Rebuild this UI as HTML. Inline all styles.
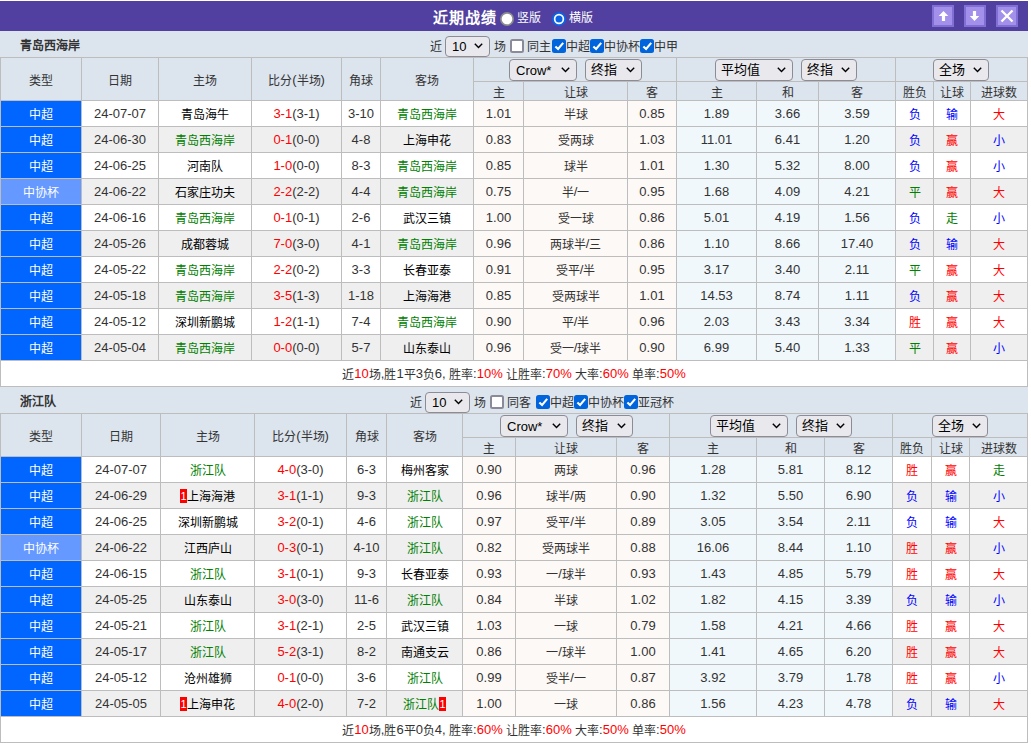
<!DOCTYPE html>
<html lang="zh-CN"><head><meta charset="utf-8"><title>近期战绩</title>
<style>
html,body{margin:0;padding:0;background:#fff;}
body{width:1031px;height:743px;overflow:hidden;position:relative;font-family:"Liberation Sans",sans-serif;font-size:12px;color:#333;}
.bar{position:absolute;left:0;top:1px;width:1028px;height:30px;background:#5140a0;}
.sec{position:absolute;left:0;width:1028px;height:26px;background:#dce4ee;}
.stitle{position:absolute;left:20px;top:0;line-height:30px;font-weight:bold;font-size:12px;color:#333;}
.grid{position:absolute;left:0;width:1028px;background:#bdbdbd;}
.c{position:absolute;text-align:center;white-space:nowrap;overflow:hidden;}
.h{color:#333;}
.h2{}
.tw{color:#fff;}
.g{color:#008000;}
.k{color:#000;}
.r{color:#ff0000;}
.rc{display:inline-block;position:relative;background:#f00;color:#fff;font-weight:normal;font-size:11px;width:7px;height:14px;vertical-align:-2px;overflow:hidden;}
.rc::after{content:'1';position:absolute;left:0;top:0;width:7px;text-align:center;line-height:15px;}
.sel{position:absolute;height:20px;border:1px solid #8c8c96;border-radius:4px;background:#e9e9ed;box-sizing:border-box;height:22px;color:#000;font-size:13px;}
.sel .st{position:absolute;left:6px;top:0;}
.sel .sl{font-size:13px;}
.sel .st{font-size:13px;}
.sel .sc{left:5px;}
.chev{position:absolute;right:6px;width:9px;height:6px;}
.chev svg{position:absolute;left:0;top:0;}
.sum{}
.t{position:absolute;line-height:32px;font-size:12px;color:#333;white-space:nowrap;}
.cb{position:absolute;width:14px;height:14px;box-sizing:border-box;border:2px solid #8a8a98;border-radius:2.5px;background:#fff;}
.cb.on{border:none;background:#0064dc;}
.cb svg{position:absolute;left:0;top:0;}
.btitle{position:absolute;left:433px;top:0;line-height:33px;font-size:15px;letter-spacing:1px;font-weight:bold;color:#fff;}
.bt{position:absolute;top:0;line-height:34px;font-size:12px;color:#fff;}
.rad{position:absolute;width:14px;height:14px;box-sizing:border-box;border-radius:50%;border:2px solid #8c8c8c;background:#fff;}
.rad.on{border:2px solid #0b64e4;}
.rad.on i{position:absolute;left:1.5px;top:1.5px;width:7px;height:7px;border-radius:50%;background:#0b64e4;}
.rsv{position:absolute;}
.btn{position:absolute;top:4px;width:22px;height:22px;box-sizing:border-box;border:2px solid #8070d3;background:#a290ea;}
.btn svg{position:absolute;left:2px;top:2px;}

.n{font-size:13px;position:relative;top:-1px;line-height:1px;}
</style></head>
<body>
<div class="bar"><span class="btitle">近期战绩</span><svg class="rsv" style="left:500px;top:11px;" width="14" height="14" viewBox="0 0 14 14"><circle cx="7" cy="7" r="7" fill="#8c8c8c"/><circle cx="7" cy="7" r="5.3" fill="#fff"/></svg><span class="bt" style="left:517px">竖版</span><svg class="rsv" style="left:552px;top:11px;" width="14" height="14" viewBox="0 0 14 14"><circle cx="7" cy="7" r="7" fill="#0b64e4"/><circle cx="7" cy="7" r="5.2" fill="#fff"/><circle cx="7" cy="7" r="3.5" fill="#0b64e4"/></svg><span class="bt" style="left:569px">横版</span><span class="btn" style="left:932px"><svg width="14" height="14" viewBox="0 0 14 14"><path d="M7.5 1.9 L12.3 6.9 L9.1 6.9 L9.1 12.1 L5.9 12.1 L5.9 6.9 L2.7 6.9 Z" fill="#fff"/></svg></span><span class="btn" style="left:964px"><svg width="14" height="14" viewBox="0 0 14 14"><path d="M4.9 1.9 L8.1 1.9 L8.1 7.1 L11.3 7.1 L6.5 12.1 L1.8 7.1 L4.9 7.1 Z" fill="#fff"/></svg></span><span class="btn" style="left:996px"><svg width="14" height="14" viewBox="0 0 14 14"><path d="M1.5 1.5 L12.5 12.5 M12.5 1.5 L1.5 12.5" stroke="#fff" stroke-width="2.3"/></svg></span></div>
<div class="sec" style="top:31px;"><span class="stitle">青岛西海岸</span>
<span class="t " style="left:430px;top:0px;">近</span>
<div class="sel small" style="left:445px;top:5px;width:45px;height:21px;"><span class="st sl" style="line-height:19px">10</span><span class="chev" style="top:6px"><svg width="9" height="6" viewBox="0 0 9 6"><path d="M0.8 0.8 L4.5 4.6 L8.2 0.8" fill="none" stroke="#000" stroke-width="1.4"/></svg></span></div>
<span class="t " style="left:494px;top:0px;">场</span>
<span class="cb" style="left:510px;top:8px;"></span>
<span class="t " style="left:527px;top:0px;">同主</span>
<span class="cb on" style="left:552px;top:8px;"><svg width="14" height="14" viewBox="0 0 14 14"><path d="M3.4 7.4 L6.1 10 L11.2 3.9" fill="none" stroke="#fff" stroke-width="2.1"/></svg></span>
<span class="t " style="left:566px;top:0px;">中超</span>
<span class="cb on" style="left:590px;top:8px;"><svg width="14" height="14" viewBox="0 0 14 14"><path d="M3.4 7.4 L6.1 10 L11.2 3.9" fill="none" stroke="#fff" stroke-width="2.1"/></svg></span>
<span class="t " style="left:604px;top:0px;">中协杯</span>
<span class="cb on" style="left:640px;top:8px;"><svg width="14" height="14" viewBox="0 0 14 14"><path d="M3.4 7.4 L6.1 10 L11.2 3.9" fill="none" stroke="#fff" stroke-width="2.1"/></svg></span>
<span class="t " style="left:654px;top:0px;">中甲</span>
</div>
<div class="grid" style="top:57px;height:330px;"></div>
<div class="c h" style="left:1px;top:58px;width:80px;height:42px;line-height:46px;background:#dce4ee;">类型</div>
<div class="c h" style="left:82px;top:58px;width:76px;height:42px;line-height:46px;background:#dce4ee;">日期</div>
<div class="c h" style="left:159px;top:58px;width:92px;height:42px;line-height:46px;background:#dce4ee;">主场</div>
<div class="c h" style="left:252px;top:58px;width:89px;height:42px;line-height:46px;background:#dce4ee;">比分<span class="n">(</span>半场<span class="n">)</span></div>
<div class="c h" style="left:342px;top:58px;width:38px;height:42px;line-height:46px;background:#dce4ee;">角球</div>
<div class="c h" style="left:381px;top:58px;width:92px;height:42px;line-height:46px;background:#dce4ee;">客场</div>
<div class="c h" style="left:474px;top:58px;width:202px;height:23px;line-height:27px;background:#dce4ee;"></div>
<div class="c h" style="left:677px;top:58px;width:218px;height:23px;line-height:27px;background:#dce4ee;"></div>
<div class="c h" style="left:896px;top:58px;width:131px;height:23px;line-height:27px;background:#dce4ee;"></div>
<div class="c h h2" style="left:474px;top:82px;width:49px;height:18px;line-height:22px;background:#dce4ee;">主</div>
<div class="c h h2" style="left:524px;top:82px;width:103px;height:18px;line-height:22px;background:#dce4ee;">让球</div>
<div class="c h h2" style="left:628px;top:82px;width:48px;height:18px;line-height:22px;background:#dce4ee;">客</div>
<div class="c h h2" style="left:677px;top:82px;width:79px;height:18px;line-height:22px;background:#dce4ee;">主</div>
<div class="c h h2" style="left:757px;top:82px;width:61px;height:18px;line-height:22px;background:#dce4ee;">和</div>
<div class="c h h2" style="left:819px;top:82px;width:76px;height:18px;line-height:22px;background:#dce4ee;">客</div>
<div class="c h h2" style="left:896px;top:82px;width:37px;height:18px;line-height:22px;background:#dce4ee;">胜负</div>
<div class="c h h2" style="left:934px;top:82px;width:36px;height:18px;line-height:22px;background:#dce4ee;">让球</div>
<div class="c h h2" style="left:971px;top:82px;width:56px;height:18px;line-height:22px;background:#dce4ee;">进球数</div>
<div class="sel " style="left:509px;top:59px;width:68px;height:22px;"><span class="st sl" style="line-height:22px">Crow*</span><span class="chev" style="top:7px"><svg width="9" height="6" viewBox="0 0 9 6"><path d="M0.8 0.8 L4.5 4.6 L8.2 0.8" fill="none" stroke="#000" stroke-width="1.4"/></svg></span></div>
<div class="sel " style="left:585px;top:59px;width:57px;height:22px;"><span class="st sc" style="line-height:20px">终指</span><span class="chev" style="top:7px"><svg width="9" height="6" viewBox="0 0 9 6"><path d="M0.8 0.8 L4.5 4.6 L8.2 0.8" fill="none" stroke="#000" stroke-width="1.4"/></svg></span></div>
<div class="sel " style="left:715px;top:59px;width:78px;height:22px;"><span class="st sc" style="line-height:20px">平均值</span><span class="chev" style="top:7px"><svg width="9" height="6" viewBox="0 0 9 6"><path d="M0.8 0.8 L4.5 4.6 L8.2 0.8" fill="none" stroke="#000" stroke-width="1.4"/></svg></span></div>
<div class="sel " style="left:801px;top:59px;width:56px;height:22px;"><span class="st sc" style="line-height:20px">终指</span><span class="chev" style="top:7px"><svg width="9" height="6" viewBox="0 0 9 6"><path d="M0.8 0.8 L4.5 4.6 L8.2 0.8" fill="none" stroke="#000" stroke-width="1.4"/></svg></span></div>
<div class="sel " style="left:933px;top:59px;width:56px;height:22px;"><span class="st sc" style="line-height:20px">全场</span><span class="chev" style="top:7px"><svg width="9" height="6" viewBox="0 0 9 6"><path d="M0.8 0.8 L4.5 4.6 L8.2 0.8" fill="none" stroke="#000" stroke-width="1.4"/></svg></span></div>
<div class="c tw" style="left:1px;top:101px;width:80px;height:25px;line-height:29px;background:#0066ff;">中超</div>
<div class="c " style="left:82px;top:101px;width:76px;height:25px;line-height:29px;background:#fff;"><span class="n">24-07-07</span></div>
<div class="c k" style="left:159px;top:101px;width:92px;height:25px;line-height:29px;background:#fff;">青岛海牛</div>
<div class="c " style="left:252px;top:101px;width:89px;height:25px;line-height:29px;background:#fff;"><span class="r"><span class="n">3-1</span></span><span class="n">(3-1)</span></div>
<div class="c " style="left:342px;top:101px;width:38px;height:25px;line-height:29px;background:#fff;"><span class="n">3-10</span></div>
<div class="c g" style="left:381px;top:101px;width:92px;height:25px;line-height:29px;background:#fff;">青岛西海岸</div>
<div class="c " style="left:474px;top:101px;width:49px;height:25px;line-height:29px;background:#fdf9f6;"><span class="n">1.01</span></div>
<div class="c " style="left:524px;top:101px;width:103px;height:25px;line-height:29px;background:#fdf9f6;">半球</div>
<div class="c " style="left:628px;top:101px;width:48px;height:25px;line-height:29px;background:#fdf9f6;"><span class="n">0.85</span></div>
<div class="c " style="left:677px;top:101px;width:79px;height:25px;line-height:29px;background:#f0f8fc;"><span class="n">1.89</span></div>
<div class="c " style="left:757px;top:101px;width:61px;height:25px;line-height:29px;background:#f0f8fc;"><span class="n">3.66</span></div>
<div class="c " style="left:819px;top:101px;width:76px;height:25px;line-height:29px;background:#f0f8fc;"><span class="n">3.59</span></div>
<div class="c " style="left:896px;top:101px;width:37px;height:25px;line-height:29px;background:#fff;color:#0000ff;">负</div>
<div class="c " style="left:934px;top:101px;width:36px;height:25px;line-height:29px;background:#fff;color:#0000ff;">输</div>
<div class="c " style="left:971px;top:101px;width:56px;height:25px;line-height:29px;background:#fff;color:#ff0000;">大</div>
<div class="c tw" style="left:1px;top:127px;width:80px;height:25px;line-height:29px;background:#0066ff;">中超</div>
<div class="c " style="left:82px;top:127px;width:76px;height:25px;line-height:29px;background:#efefef;"><span class="n">24-06-30</span></div>
<div class="c g" style="left:159px;top:127px;width:92px;height:25px;line-height:29px;background:#efefef;">青岛西海岸</div>
<div class="c " style="left:252px;top:127px;width:89px;height:25px;line-height:29px;background:#efefef;"><span class="r"><span class="n">0-1</span></span><span class="n">(0-0)</span></div>
<div class="c " style="left:342px;top:127px;width:38px;height:25px;line-height:29px;background:#efefef;"><span class="n">4-8</span></div>
<div class="c k" style="left:381px;top:127px;width:92px;height:25px;line-height:29px;background:#efefef;">上海申花</div>
<div class="c " style="left:474px;top:127px;width:49px;height:25px;line-height:29px;background:#fdf9f6;"><span class="n">0.83</span></div>
<div class="c " style="left:524px;top:127px;width:103px;height:25px;line-height:29px;background:#fdf9f6;">受两球</div>
<div class="c " style="left:628px;top:127px;width:48px;height:25px;line-height:29px;background:#fdf9f6;"><span class="n">1.03</span></div>
<div class="c " style="left:677px;top:127px;width:79px;height:25px;line-height:29px;background:#f0f8fc;"><span class="n">11.01</span></div>
<div class="c " style="left:757px;top:127px;width:61px;height:25px;line-height:29px;background:#f0f8fc;"><span class="n">6.41</span></div>
<div class="c " style="left:819px;top:127px;width:76px;height:25px;line-height:29px;background:#f0f8fc;"><span class="n">1.20</span></div>
<div class="c " style="left:896px;top:127px;width:37px;height:25px;line-height:29px;background:#efefef;color:#0000ff;">负</div>
<div class="c " style="left:934px;top:127px;width:36px;height:25px;line-height:29px;background:#efefef;color:#ff0000;">赢</div>
<div class="c " style="left:971px;top:127px;width:56px;height:25px;line-height:29px;background:#efefef;color:#0000ff;">小</div>
<div class="c tw" style="left:1px;top:153px;width:80px;height:25px;line-height:29px;background:#0066ff;">中超</div>
<div class="c " style="left:82px;top:153px;width:76px;height:25px;line-height:29px;background:#fff;"><span class="n">24-06-25</span></div>
<div class="c k" style="left:159px;top:153px;width:92px;height:25px;line-height:29px;background:#fff;">河南队</div>
<div class="c " style="left:252px;top:153px;width:89px;height:25px;line-height:29px;background:#fff;"><span class="r"><span class="n">1-0</span></span><span class="n">(0-0)</span></div>
<div class="c " style="left:342px;top:153px;width:38px;height:25px;line-height:29px;background:#fff;"><span class="n">8-3</span></div>
<div class="c g" style="left:381px;top:153px;width:92px;height:25px;line-height:29px;background:#fff;">青岛西海岸</div>
<div class="c " style="left:474px;top:153px;width:49px;height:25px;line-height:29px;background:#fdf9f6;"><span class="n">0.85</span></div>
<div class="c " style="left:524px;top:153px;width:103px;height:25px;line-height:29px;background:#fdf9f6;">球半</div>
<div class="c " style="left:628px;top:153px;width:48px;height:25px;line-height:29px;background:#fdf9f6;"><span class="n">1.01</span></div>
<div class="c " style="left:677px;top:153px;width:79px;height:25px;line-height:29px;background:#f0f8fc;"><span class="n">1.30</span></div>
<div class="c " style="left:757px;top:153px;width:61px;height:25px;line-height:29px;background:#f0f8fc;"><span class="n">5.32</span></div>
<div class="c " style="left:819px;top:153px;width:76px;height:25px;line-height:29px;background:#f0f8fc;"><span class="n">8.00</span></div>
<div class="c " style="left:896px;top:153px;width:37px;height:25px;line-height:29px;background:#fff;color:#0000ff;">负</div>
<div class="c " style="left:934px;top:153px;width:36px;height:25px;line-height:29px;background:#fff;color:#ff0000;">赢</div>
<div class="c " style="left:971px;top:153px;width:56px;height:25px;line-height:29px;background:#fff;color:#0000ff;">小</div>
<div class="c tw" style="left:1px;top:179px;width:80px;height:25px;line-height:29px;background:#6699ff;">中协杯</div>
<div class="c " style="left:82px;top:179px;width:76px;height:25px;line-height:29px;background:#efefef;"><span class="n">24-06-22</span></div>
<div class="c k" style="left:159px;top:179px;width:92px;height:25px;line-height:29px;background:#efefef;">石家庄功夫</div>
<div class="c " style="left:252px;top:179px;width:89px;height:25px;line-height:29px;background:#efefef;"><span class="r"><span class="n">2-2</span></span><span class="n">(2-2)</span></div>
<div class="c " style="left:342px;top:179px;width:38px;height:25px;line-height:29px;background:#efefef;"><span class="n">4-4</span></div>
<div class="c g" style="left:381px;top:179px;width:92px;height:25px;line-height:29px;background:#efefef;">青岛西海岸</div>
<div class="c " style="left:474px;top:179px;width:49px;height:25px;line-height:29px;background:#fdf9f6;"><span class="n">0.75</span></div>
<div class="c " style="left:524px;top:179px;width:103px;height:25px;line-height:29px;background:#fdf9f6;">半<span class="n">/</span>一</div>
<div class="c " style="left:628px;top:179px;width:48px;height:25px;line-height:29px;background:#fdf9f6;"><span class="n">0.95</span></div>
<div class="c " style="left:677px;top:179px;width:79px;height:25px;line-height:29px;background:#f0f8fc;"><span class="n">1.68</span></div>
<div class="c " style="left:757px;top:179px;width:61px;height:25px;line-height:29px;background:#f0f8fc;"><span class="n">4.09</span></div>
<div class="c " style="left:819px;top:179px;width:76px;height:25px;line-height:29px;background:#f0f8fc;"><span class="n">4.21</span></div>
<div class="c " style="left:896px;top:179px;width:37px;height:25px;line-height:29px;background:#efefef;color:#008000;">平</div>
<div class="c " style="left:934px;top:179px;width:36px;height:25px;line-height:29px;background:#efefef;color:#ff0000;">赢</div>
<div class="c " style="left:971px;top:179px;width:56px;height:25px;line-height:29px;background:#efefef;color:#ff0000;">大</div>
<div class="c tw" style="left:1px;top:205px;width:80px;height:25px;line-height:29px;background:#0066ff;">中超</div>
<div class="c " style="left:82px;top:205px;width:76px;height:25px;line-height:29px;background:#fff;"><span class="n">24-06-16</span></div>
<div class="c g" style="left:159px;top:205px;width:92px;height:25px;line-height:29px;background:#fff;">青岛西海岸</div>
<div class="c " style="left:252px;top:205px;width:89px;height:25px;line-height:29px;background:#fff;"><span class="r"><span class="n">0-1</span></span><span class="n">(0-1)</span></div>
<div class="c " style="left:342px;top:205px;width:38px;height:25px;line-height:29px;background:#fff;"><span class="n">2-6</span></div>
<div class="c k" style="left:381px;top:205px;width:92px;height:25px;line-height:29px;background:#fff;">武汉三镇</div>
<div class="c " style="left:474px;top:205px;width:49px;height:25px;line-height:29px;background:#fdf9f6;"><span class="n">1.00</span></div>
<div class="c " style="left:524px;top:205px;width:103px;height:25px;line-height:29px;background:#fdf9f6;">受一球</div>
<div class="c " style="left:628px;top:205px;width:48px;height:25px;line-height:29px;background:#fdf9f6;"><span class="n">0.86</span></div>
<div class="c " style="left:677px;top:205px;width:79px;height:25px;line-height:29px;background:#f0f8fc;"><span class="n">5.01</span></div>
<div class="c " style="left:757px;top:205px;width:61px;height:25px;line-height:29px;background:#f0f8fc;"><span class="n">4.19</span></div>
<div class="c " style="left:819px;top:205px;width:76px;height:25px;line-height:29px;background:#f0f8fc;"><span class="n">1.56</span></div>
<div class="c " style="left:896px;top:205px;width:37px;height:25px;line-height:29px;background:#fff;color:#0000ff;">负</div>
<div class="c " style="left:934px;top:205px;width:36px;height:25px;line-height:29px;background:#fff;color:#008000;">走</div>
<div class="c " style="left:971px;top:205px;width:56px;height:25px;line-height:29px;background:#fff;color:#0000ff;">小</div>
<div class="c tw" style="left:1px;top:231px;width:80px;height:25px;line-height:29px;background:#0066ff;">中超</div>
<div class="c " style="left:82px;top:231px;width:76px;height:25px;line-height:29px;background:#efefef;"><span class="n">24-05-26</span></div>
<div class="c k" style="left:159px;top:231px;width:92px;height:25px;line-height:29px;background:#efefef;">成都蓉城</div>
<div class="c " style="left:252px;top:231px;width:89px;height:25px;line-height:29px;background:#efefef;"><span class="r"><span class="n">7-0</span></span><span class="n">(3-0)</span></div>
<div class="c " style="left:342px;top:231px;width:38px;height:25px;line-height:29px;background:#efefef;"><span class="n">4-1</span></div>
<div class="c g" style="left:381px;top:231px;width:92px;height:25px;line-height:29px;background:#efefef;">青岛西海岸</div>
<div class="c " style="left:474px;top:231px;width:49px;height:25px;line-height:29px;background:#fdf9f6;"><span class="n">0.96</span></div>
<div class="c " style="left:524px;top:231px;width:103px;height:25px;line-height:29px;background:#fdf9f6;">两球半<span class="n">/</span>三</div>
<div class="c " style="left:628px;top:231px;width:48px;height:25px;line-height:29px;background:#fdf9f6;"><span class="n">0.86</span></div>
<div class="c " style="left:677px;top:231px;width:79px;height:25px;line-height:29px;background:#f0f8fc;"><span class="n">1.10</span></div>
<div class="c " style="left:757px;top:231px;width:61px;height:25px;line-height:29px;background:#f0f8fc;"><span class="n">8.66</span></div>
<div class="c " style="left:819px;top:231px;width:76px;height:25px;line-height:29px;background:#f0f8fc;"><span class="n">17.40</span></div>
<div class="c " style="left:896px;top:231px;width:37px;height:25px;line-height:29px;background:#efefef;color:#0000ff;">负</div>
<div class="c " style="left:934px;top:231px;width:36px;height:25px;line-height:29px;background:#efefef;color:#0000ff;">输</div>
<div class="c " style="left:971px;top:231px;width:56px;height:25px;line-height:29px;background:#efefef;color:#ff0000;">大</div>
<div class="c tw" style="left:1px;top:257px;width:80px;height:25px;line-height:29px;background:#0066ff;">中超</div>
<div class="c " style="left:82px;top:257px;width:76px;height:25px;line-height:29px;background:#fff;"><span class="n">24-05-22</span></div>
<div class="c g" style="left:159px;top:257px;width:92px;height:25px;line-height:29px;background:#fff;">青岛西海岸</div>
<div class="c " style="left:252px;top:257px;width:89px;height:25px;line-height:29px;background:#fff;"><span class="r"><span class="n">2-2</span></span><span class="n">(0-2)</span></div>
<div class="c " style="left:342px;top:257px;width:38px;height:25px;line-height:29px;background:#fff;"><span class="n">3-3</span></div>
<div class="c k" style="left:381px;top:257px;width:92px;height:25px;line-height:29px;background:#fff;">长春亚泰</div>
<div class="c " style="left:474px;top:257px;width:49px;height:25px;line-height:29px;background:#fdf9f6;"><span class="n">0.91</span></div>
<div class="c " style="left:524px;top:257px;width:103px;height:25px;line-height:29px;background:#fdf9f6;">受平<span class="n">/</span>半</div>
<div class="c " style="left:628px;top:257px;width:48px;height:25px;line-height:29px;background:#fdf9f6;"><span class="n">0.95</span></div>
<div class="c " style="left:677px;top:257px;width:79px;height:25px;line-height:29px;background:#f0f8fc;"><span class="n">3.17</span></div>
<div class="c " style="left:757px;top:257px;width:61px;height:25px;line-height:29px;background:#f0f8fc;"><span class="n">3.40</span></div>
<div class="c " style="left:819px;top:257px;width:76px;height:25px;line-height:29px;background:#f0f8fc;"><span class="n">2.11</span></div>
<div class="c " style="left:896px;top:257px;width:37px;height:25px;line-height:29px;background:#fff;color:#008000;">平</div>
<div class="c " style="left:934px;top:257px;width:36px;height:25px;line-height:29px;background:#fff;color:#ff0000;">赢</div>
<div class="c " style="left:971px;top:257px;width:56px;height:25px;line-height:29px;background:#fff;color:#ff0000;">大</div>
<div class="c tw" style="left:1px;top:283px;width:80px;height:25px;line-height:29px;background:#0066ff;">中超</div>
<div class="c " style="left:82px;top:283px;width:76px;height:25px;line-height:29px;background:#efefef;"><span class="n">24-05-18</span></div>
<div class="c g" style="left:159px;top:283px;width:92px;height:25px;line-height:29px;background:#efefef;">青岛西海岸</div>
<div class="c " style="left:252px;top:283px;width:89px;height:25px;line-height:29px;background:#efefef;"><span class="r"><span class="n">3-5</span></span><span class="n">(1-3)</span></div>
<div class="c " style="left:342px;top:283px;width:38px;height:25px;line-height:29px;background:#efefef;"><span class="n">1-18</span></div>
<div class="c k" style="left:381px;top:283px;width:92px;height:25px;line-height:29px;background:#efefef;">上海海港</div>
<div class="c " style="left:474px;top:283px;width:49px;height:25px;line-height:29px;background:#fdf9f6;"><span class="n">0.85</span></div>
<div class="c " style="left:524px;top:283px;width:103px;height:25px;line-height:29px;background:#fdf9f6;">受两球半</div>
<div class="c " style="left:628px;top:283px;width:48px;height:25px;line-height:29px;background:#fdf9f6;"><span class="n">1.01</span></div>
<div class="c " style="left:677px;top:283px;width:79px;height:25px;line-height:29px;background:#f0f8fc;"><span class="n">14.53</span></div>
<div class="c " style="left:757px;top:283px;width:61px;height:25px;line-height:29px;background:#f0f8fc;"><span class="n">8.74</span></div>
<div class="c " style="left:819px;top:283px;width:76px;height:25px;line-height:29px;background:#f0f8fc;"><span class="n">1.11</span></div>
<div class="c " style="left:896px;top:283px;width:37px;height:25px;line-height:29px;background:#efefef;color:#0000ff;">负</div>
<div class="c " style="left:934px;top:283px;width:36px;height:25px;line-height:29px;background:#efefef;color:#ff0000;">赢</div>
<div class="c " style="left:971px;top:283px;width:56px;height:25px;line-height:29px;background:#efefef;color:#ff0000;">大</div>
<div class="c tw" style="left:1px;top:309px;width:80px;height:25px;line-height:29px;background:#0066ff;">中超</div>
<div class="c " style="left:82px;top:309px;width:76px;height:25px;line-height:29px;background:#fff;"><span class="n">24-05-12</span></div>
<div class="c k" style="left:159px;top:309px;width:92px;height:25px;line-height:29px;background:#fff;">深圳新鹏城</div>
<div class="c " style="left:252px;top:309px;width:89px;height:25px;line-height:29px;background:#fff;"><span class="r"><span class="n">1-2</span></span><span class="n">(1-1)</span></div>
<div class="c " style="left:342px;top:309px;width:38px;height:25px;line-height:29px;background:#fff;"><span class="n">7-4</span></div>
<div class="c g" style="left:381px;top:309px;width:92px;height:25px;line-height:29px;background:#fff;">青岛西海岸</div>
<div class="c " style="left:474px;top:309px;width:49px;height:25px;line-height:29px;background:#fdf9f6;"><span class="n">0.90</span></div>
<div class="c " style="left:524px;top:309px;width:103px;height:25px;line-height:29px;background:#fdf9f6;">平<span class="n">/</span>半</div>
<div class="c " style="left:628px;top:309px;width:48px;height:25px;line-height:29px;background:#fdf9f6;"><span class="n">0.96</span></div>
<div class="c " style="left:677px;top:309px;width:79px;height:25px;line-height:29px;background:#f0f8fc;"><span class="n">2.03</span></div>
<div class="c " style="left:757px;top:309px;width:61px;height:25px;line-height:29px;background:#f0f8fc;"><span class="n">3.43</span></div>
<div class="c " style="left:819px;top:309px;width:76px;height:25px;line-height:29px;background:#f0f8fc;"><span class="n">3.34</span></div>
<div class="c " style="left:896px;top:309px;width:37px;height:25px;line-height:29px;background:#fff;color:#ff0000;">胜</div>
<div class="c " style="left:934px;top:309px;width:36px;height:25px;line-height:29px;background:#fff;color:#ff0000;">赢</div>
<div class="c " style="left:971px;top:309px;width:56px;height:25px;line-height:29px;background:#fff;color:#ff0000;">大</div>
<div class="c tw" style="left:1px;top:335px;width:80px;height:25px;line-height:29px;background:#0066ff;">中超</div>
<div class="c " style="left:82px;top:335px;width:76px;height:25px;line-height:29px;background:#efefef;"><span class="n">24-05-04</span></div>
<div class="c g" style="left:159px;top:335px;width:92px;height:25px;line-height:29px;background:#efefef;">青岛西海岸</div>
<div class="c " style="left:252px;top:335px;width:89px;height:25px;line-height:29px;background:#efefef;"><span class="r"><span class="n">0-0</span></span><span class="n">(0-0)</span></div>
<div class="c " style="left:342px;top:335px;width:38px;height:25px;line-height:29px;background:#efefef;"><span class="n">5-7</span></div>
<div class="c k" style="left:381px;top:335px;width:92px;height:25px;line-height:29px;background:#efefef;">山东泰山</div>
<div class="c " style="left:474px;top:335px;width:49px;height:25px;line-height:29px;background:#fdf9f6;"><span class="n">0.96</span></div>
<div class="c " style="left:524px;top:335px;width:103px;height:25px;line-height:29px;background:#fdf9f6;">受一<span class="n">/</span>球半</div>
<div class="c " style="left:628px;top:335px;width:48px;height:25px;line-height:29px;background:#fdf9f6;"><span class="n">0.90</span></div>
<div class="c " style="left:677px;top:335px;width:79px;height:25px;line-height:29px;background:#f0f8fc;"><span class="n">6.99</span></div>
<div class="c " style="left:757px;top:335px;width:61px;height:25px;line-height:29px;background:#f0f8fc;"><span class="n">5.40</span></div>
<div class="c " style="left:819px;top:335px;width:76px;height:25px;line-height:29px;background:#f0f8fc;"><span class="n">1.33</span></div>
<div class="c " style="left:896px;top:335px;width:37px;height:25px;line-height:29px;background:#efefef;color:#008000;">平</div>
<div class="c " style="left:934px;top:335px;width:36px;height:25px;line-height:29px;background:#efefef;color:#ff0000;">赢</div>
<div class="c " style="left:971px;top:335px;width:56px;height:25px;line-height:29px;background:#efefef;color:#0000ff;">小</div>
<div class="c sum" style="left:1px;top:361px;width:1026px;height:25px;line-height:29px;background:#fff;">近<span class="r"><span class="n">10</span></span>场<span class="n">,</span>胜<span class="n">1</span>平<span class="n">3</span>负<span class="n">6,</span> 胜率<span class="n">:</span><span class="r"><span class="n">10%</span></span> 让胜率<span class="n">:</span><span class="r"><span class="n">70%</span></span> 大率<span class="n">:</span><span class="r"><span class="n">60%</span></span> 单率<span class="n">:</span><span class="r"><span class="n">50%</span></span></div>
<div class="sec" style="top:387px;"><span class="stitle">浙江队</span>
<span class="t " style="left:410px;top:0px;">近</span>
<div class="sel small" style="left:425px;top:5px;width:45px;height:21px;"><span class="st sl" style="line-height:19px">10</span><span class="chev" style="top:6px"><svg width="9" height="6" viewBox="0 0 9 6"><path d="M0.8 0.8 L4.5 4.6 L8.2 0.8" fill="none" stroke="#000" stroke-width="1.4"/></svg></span></div>
<span class="t " style="left:474px;top:0px;">场</span>
<span class="cb" style="left:490px;top:8px;"></span>
<span class="t " style="left:507px;top:0px;">同客</span>
<span class="cb on" style="left:536px;top:8px;"><svg width="14" height="14" viewBox="0 0 14 14"><path d="M3.4 7.4 L6.1 10 L11.2 3.9" fill="none" stroke="#fff" stroke-width="2.1"/></svg></span>
<span class="t " style="left:550px;top:0px;">中超</span>
<span class="cb on" style="left:574px;top:8px;"><svg width="14" height="14" viewBox="0 0 14 14"><path d="M3.4 7.4 L6.1 10 L11.2 3.9" fill="none" stroke="#fff" stroke-width="2.1"/></svg></span>
<span class="t " style="left:588px;top:0px;">中协杯</span>
<span class="cb on" style="left:624px;top:8px;"><svg width="14" height="14" viewBox="0 0 14 14"><path d="M3.4 7.4 L6.1 10 L11.2 3.9" fill="none" stroke="#fff" stroke-width="2.1"/></svg></span>
<span class="t " style="left:638px;top:0px;">亚冠杯</span>
</div>
<div class="grid" style="top:413px;height:330px;"></div>
<div class="c h" style="left:1px;top:414px;width:80px;height:42px;line-height:46px;background:#dce4ee;">类型</div>
<div class="c h" style="left:82px;top:414px;width:78px;height:42px;line-height:46px;background:#dce4ee;">日期</div>
<div class="c h" style="left:161px;top:414px;width:93px;height:42px;line-height:46px;background:#dce4ee;">主场</div>
<div class="c h" style="left:255px;top:414px;width:91px;height:42px;line-height:46px;background:#dce4ee;">比分<span class="n">(</span>半场<span class="n">)</span></div>
<div class="c h" style="left:347px;top:414px;width:39px;height:42px;line-height:46px;background:#dce4ee;">角球</div>
<div class="c h" style="left:387px;top:414px;width:75px;height:42px;line-height:46px;background:#dce4ee;">客场</div>
<div class="c h" style="left:463px;top:414px;width:206px;height:23px;line-height:27px;background:#dce4ee;"></div>
<div class="c h" style="left:670px;top:414px;width:222px;height:23px;line-height:27px;background:#dce4ee;"></div>
<div class="c h" style="left:893px;top:414px;width:134px;height:23px;line-height:27px;background:#dce4ee;"></div>
<div class="c h h2" style="left:463px;top:438px;width:52px;height:18px;line-height:22px;background:#dce4ee;">主</div>
<div class="c h h2" style="left:516px;top:438px;width:100px;height:18px;line-height:22px;background:#dce4ee;">让球</div>
<div class="c h h2" style="left:617px;top:438px;width:52px;height:18px;line-height:22px;background:#dce4ee;">客</div>
<div class="c h h2" style="left:670px;top:438px;width:86px;height:18px;line-height:22px;background:#dce4ee;">主</div>
<div class="c h h2" style="left:757px;top:438px;width:67px;height:18px;line-height:22px;background:#dce4ee;">和</div>
<div class="c h h2" style="left:825px;top:438px;width:67px;height:18px;line-height:22px;background:#dce4ee;">客</div>
<div class="c h h2" style="left:893px;top:438px;width:38px;height:18px;line-height:22px;background:#dce4ee;">胜负</div>
<div class="c h h2" style="left:932px;top:438px;width:37px;height:18px;line-height:22px;background:#dce4ee;">让球</div>
<div class="c h h2" style="left:970px;top:438px;width:57px;height:18px;line-height:22px;background:#dce4ee;">进球数</div>
<div class="sel " style="left:500px;top:415px;width:68px;height:22px;"><span class="st sl" style="line-height:22px">Crow*</span><span class="chev" style="top:7px"><svg width="9" height="6" viewBox="0 0 9 6"><path d="M0.8 0.8 L4.5 4.6 L8.2 0.8" fill="none" stroke="#000" stroke-width="1.4"/></svg></span></div>
<div class="sel " style="left:576px;top:415px;width:57px;height:22px;"><span class="st sc" style="line-height:20px">终指</span><span class="chev" style="top:7px"><svg width="9" height="6" viewBox="0 0 9 6"><path d="M0.8 0.8 L4.5 4.6 L8.2 0.8" fill="none" stroke="#000" stroke-width="1.4"/></svg></span></div>
<div class="sel " style="left:710px;top:415px;width:78px;height:22px;"><span class="st sc" style="line-height:20px">平均值</span><span class="chev" style="top:7px"><svg width="9" height="6" viewBox="0 0 9 6"><path d="M0.8 0.8 L4.5 4.6 L8.2 0.8" fill="none" stroke="#000" stroke-width="1.4"/></svg></span></div>
<div class="sel " style="left:796px;top:415px;width:56px;height:22px;"><span class="st sc" style="line-height:20px">终指</span><span class="chev" style="top:7px"><svg width="9" height="6" viewBox="0 0 9 6"><path d="M0.8 0.8 L4.5 4.6 L8.2 0.8" fill="none" stroke="#000" stroke-width="1.4"/></svg></span></div>
<div class="sel " style="left:932px;top:415px;width:56px;height:22px;"><span class="st sc" style="line-height:20px">全场</span><span class="chev" style="top:7px"><svg width="9" height="6" viewBox="0 0 9 6"><path d="M0.8 0.8 L4.5 4.6 L8.2 0.8" fill="none" stroke="#000" stroke-width="1.4"/></svg></span></div>
<div class="c tw" style="left:1px;top:457px;width:80px;height:25px;line-height:29px;background:#0066ff;">中超</div>
<div class="c " style="left:82px;top:457px;width:78px;height:25px;line-height:29px;background:#fff;"><span class="n">24-07-07</span></div>
<div class="c g" style="left:161px;top:457px;width:93px;height:25px;line-height:29px;background:#fff;">浙江队</div>
<div class="c " style="left:255px;top:457px;width:91px;height:25px;line-height:29px;background:#fff;"><span class="r"><span class="n">4-0</span></span><span class="n">(3-0)</span></div>
<div class="c " style="left:347px;top:457px;width:39px;height:25px;line-height:29px;background:#fff;"><span class="n">6-3</span></div>
<div class="c k" style="left:387px;top:457px;width:75px;height:25px;line-height:29px;background:#fff;">梅州客家</div>
<div class="c " style="left:463px;top:457px;width:52px;height:25px;line-height:29px;background:#fdf9f6;"><span class="n">0.90</span></div>
<div class="c " style="left:516px;top:457px;width:100px;height:25px;line-height:29px;background:#fdf9f6;">两球</div>
<div class="c " style="left:617px;top:457px;width:52px;height:25px;line-height:29px;background:#fdf9f6;"><span class="n">0.96</span></div>
<div class="c " style="left:670px;top:457px;width:86px;height:25px;line-height:29px;background:#f0f8fc;"><span class="n">1.28</span></div>
<div class="c " style="left:757px;top:457px;width:67px;height:25px;line-height:29px;background:#f0f8fc;"><span class="n">5.81</span></div>
<div class="c " style="left:825px;top:457px;width:67px;height:25px;line-height:29px;background:#f0f8fc;"><span class="n">8.12</span></div>
<div class="c " style="left:893px;top:457px;width:38px;height:25px;line-height:29px;background:#fff;color:#ff0000;">胜</div>
<div class="c " style="left:932px;top:457px;width:37px;height:25px;line-height:29px;background:#fff;color:#ff0000;">赢</div>
<div class="c " style="left:970px;top:457px;width:57px;height:25px;line-height:29px;background:#fff;color:#008000;">走</div>
<div class="c tw" style="left:1px;top:483px;width:80px;height:25px;line-height:29px;background:#0066ff;">中超</div>
<div class="c " style="left:82px;top:483px;width:78px;height:25px;line-height:29px;background:#efefef;"><span class="n">24-06-29</span></div>
<div class="c k" style="left:161px;top:483px;width:93px;height:25px;line-height:29px;background:#efefef;"><b class="rc"></b>上海海港</div>
<div class="c " style="left:255px;top:483px;width:91px;height:25px;line-height:29px;background:#efefef;"><span class="r"><span class="n">3-1</span></span><span class="n">(1-1)</span></div>
<div class="c " style="left:347px;top:483px;width:39px;height:25px;line-height:29px;background:#efefef;"><span class="n">9-3</span></div>
<div class="c g" style="left:387px;top:483px;width:75px;height:25px;line-height:29px;background:#efefef;">浙江队</div>
<div class="c " style="left:463px;top:483px;width:52px;height:25px;line-height:29px;background:#fdf9f6;"><span class="n">0.96</span></div>
<div class="c " style="left:516px;top:483px;width:100px;height:25px;line-height:29px;background:#fdf9f6;">球半<span class="n">/</span>两</div>
<div class="c " style="left:617px;top:483px;width:52px;height:25px;line-height:29px;background:#fdf9f6;"><span class="n">0.90</span></div>
<div class="c " style="left:670px;top:483px;width:86px;height:25px;line-height:29px;background:#f0f8fc;"><span class="n">1.32</span></div>
<div class="c " style="left:757px;top:483px;width:67px;height:25px;line-height:29px;background:#f0f8fc;"><span class="n">5.50</span></div>
<div class="c " style="left:825px;top:483px;width:67px;height:25px;line-height:29px;background:#f0f8fc;"><span class="n">6.90</span></div>
<div class="c " style="left:893px;top:483px;width:38px;height:25px;line-height:29px;background:#efefef;color:#0000ff;">负</div>
<div class="c " style="left:932px;top:483px;width:37px;height:25px;line-height:29px;background:#efefef;color:#0000ff;">输</div>
<div class="c " style="left:970px;top:483px;width:57px;height:25px;line-height:29px;background:#efefef;color:#0000ff;">小</div>
<div class="c tw" style="left:1px;top:509px;width:80px;height:25px;line-height:29px;background:#0066ff;">中超</div>
<div class="c " style="left:82px;top:509px;width:78px;height:25px;line-height:29px;background:#fff;"><span class="n">24-06-25</span></div>
<div class="c k" style="left:161px;top:509px;width:93px;height:25px;line-height:29px;background:#fff;">深圳新鹏城</div>
<div class="c " style="left:255px;top:509px;width:91px;height:25px;line-height:29px;background:#fff;"><span class="r"><span class="n">3-2</span></span><span class="n">(0-1)</span></div>
<div class="c " style="left:347px;top:509px;width:39px;height:25px;line-height:29px;background:#fff;"><span class="n">4-6</span></div>
<div class="c g" style="left:387px;top:509px;width:75px;height:25px;line-height:29px;background:#fff;">浙江队</div>
<div class="c " style="left:463px;top:509px;width:52px;height:25px;line-height:29px;background:#fdf9f6;"><span class="n">0.97</span></div>
<div class="c " style="left:516px;top:509px;width:100px;height:25px;line-height:29px;background:#fdf9f6;">受平<span class="n">/</span>半</div>
<div class="c " style="left:617px;top:509px;width:52px;height:25px;line-height:29px;background:#fdf9f6;"><span class="n">0.89</span></div>
<div class="c " style="left:670px;top:509px;width:86px;height:25px;line-height:29px;background:#f0f8fc;"><span class="n">3.05</span></div>
<div class="c " style="left:757px;top:509px;width:67px;height:25px;line-height:29px;background:#f0f8fc;"><span class="n">3.54</span></div>
<div class="c " style="left:825px;top:509px;width:67px;height:25px;line-height:29px;background:#f0f8fc;"><span class="n">2.11</span></div>
<div class="c " style="left:893px;top:509px;width:38px;height:25px;line-height:29px;background:#fff;color:#0000ff;">负</div>
<div class="c " style="left:932px;top:509px;width:37px;height:25px;line-height:29px;background:#fff;color:#0000ff;">输</div>
<div class="c " style="left:970px;top:509px;width:57px;height:25px;line-height:29px;background:#fff;color:#ff0000;">大</div>
<div class="c tw" style="left:1px;top:535px;width:80px;height:25px;line-height:29px;background:#6699ff;">中协杯</div>
<div class="c " style="left:82px;top:535px;width:78px;height:25px;line-height:29px;background:#efefef;"><span class="n">24-06-22</span></div>
<div class="c k" style="left:161px;top:535px;width:93px;height:25px;line-height:29px;background:#efefef;">江西庐山</div>
<div class="c " style="left:255px;top:535px;width:91px;height:25px;line-height:29px;background:#efefef;"><span class="r"><span class="n">0-3</span></span><span class="n">(0-1)</span></div>
<div class="c " style="left:347px;top:535px;width:39px;height:25px;line-height:29px;background:#efefef;"><span class="n">4-10</span></div>
<div class="c g" style="left:387px;top:535px;width:75px;height:25px;line-height:29px;background:#efefef;">浙江队</div>
<div class="c " style="left:463px;top:535px;width:52px;height:25px;line-height:29px;background:#fdf9f6;"><span class="n">0.82</span></div>
<div class="c " style="left:516px;top:535px;width:100px;height:25px;line-height:29px;background:#fdf9f6;">受两球半</div>
<div class="c " style="left:617px;top:535px;width:52px;height:25px;line-height:29px;background:#fdf9f6;"><span class="n">0.88</span></div>
<div class="c " style="left:670px;top:535px;width:86px;height:25px;line-height:29px;background:#f0f8fc;"><span class="n">16.06</span></div>
<div class="c " style="left:757px;top:535px;width:67px;height:25px;line-height:29px;background:#f0f8fc;"><span class="n">8.44</span></div>
<div class="c " style="left:825px;top:535px;width:67px;height:25px;line-height:29px;background:#f0f8fc;"><span class="n">1.10</span></div>
<div class="c " style="left:893px;top:535px;width:38px;height:25px;line-height:29px;background:#efefef;color:#ff0000;">胜</div>
<div class="c " style="left:932px;top:535px;width:37px;height:25px;line-height:29px;background:#efefef;color:#ff0000;">赢</div>
<div class="c " style="left:970px;top:535px;width:57px;height:25px;line-height:29px;background:#efefef;color:#0000ff;">小</div>
<div class="c tw" style="left:1px;top:561px;width:80px;height:25px;line-height:29px;background:#0066ff;">中超</div>
<div class="c " style="left:82px;top:561px;width:78px;height:25px;line-height:29px;background:#fff;"><span class="n">24-06-15</span></div>
<div class="c g" style="left:161px;top:561px;width:93px;height:25px;line-height:29px;background:#fff;">浙江队</div>
<div class="c " style="left:255px;top:561px;width:91px;height:25px;line-height:29px;background:#fff;"><span class="r"><span class="n">3-1</span></span><span class="n">(0-1)</span></div>
<div class="c " style="left:347px;top:561px;width:39px;height:25px;line-height:29px;background:#fff;"><span class="n">9-3</span></div>
<div class="c k" style="left:387px;top:561px;width:75px;height:25px;line-height:29px;background:#fff;">长春亚泰</div>
<div class="c " style="left:463px;top:561px;width:52px;height:25px;line-height:29px;background:#fdf9f6;"><span class="n">0.93</span></div>
<div class="c " style="left:516px;top:561px;width:100px;height:25px;line-height:29px;background:#fdf9f6;">一<span class="n">/</span>球半</div>
<div class="c " style="left:617px;top:561px;width:52px;height:25px;line-height:29px;background:#fdf9f6;"><span class="n">0.93</span></div>
<div class="c " style="left:670px;top:561px;width:86px;height:25px;line-height:29px;background:#f0f8fc;"><span class="n">1.43</span></div>
<div class="c " style="left:757px;top:561px;width:67px;height:25px;line-height:29px;background:#f0f8fc;"><span class="n">4.85</span></div>
<div class="c " style="left:825px;top:561px;width:67px;height:25px;line-height:29px;background:#f0f8fc;"><span class="n">5.79</span></div>
<div class="c " style="left:893px;top:561px;width:38px;height:25px;line-height:29px;background:#fff;color:#ff0000;">胜</div>
<div class="c " style="left:932px;top:561px;width:37px;height:25px;line-height:29px;background:#fff;color:#ff0000;">赢</div>
<div class="c " style="left:970px;top:561px;width:57px;height:25px;line-height:29px;background:#fff;color:#ff0000;">大</div>
<div class="c tw" style="left:1px;top:587px;width:80px;height:25px;line-height:29px;background:#0066ff;">中超</div>
<div class="c " style="left:82px;top:587px;width:78px;height:25px;line-height:29px;background:#efefef;"><span class="n">24-05-25</span></div>
<div class="c k" style="left:161px;top:587px;width:93px;height:25px;line-height:29px;background:#efefef;">山东泰山</div>
<div class="c " style="left:255px;top:587px;width:91px;height:25px;line-height:29px;background:#efefef;"><span class="r"><span class="n">3-0</span></span><span class="n">(3-0)</span></div>
<div class="c " style="left:347px;top:587px;width:39px;height:25px;line-height:29px;background:#efefef;"><span class="n">11-6</span></div>
<div class="c g" style="left:387px;top:587px;width:75px;height:25px;line-height:29px;background:#efefef;">浙江队</div>
<div class="c " style="left:463px;top:587px;width:52px;height:25px;line-height:29px;background:#fdf9f6;"><span class="n">0.84</span></div>
<div class="c " style="left:516px;top:587px;width:100px;height:25px;line-height:29px;background:#fdf9f6;">半球</div>
<div class="c " style="left:617px;top:587px;width:52px;height:25px;line-height:29px;background:#fdf9f6;"><span class="n">1.02</span></div>
<div class="c " style="left:670px;top:587px;width:86px;height:25px;line-height:29px;background:#f0f8fc;"><span class="n">1.82</span></div>
<div class="c " style="left:757px;top:587px;width:67px;height:25px;line-height:29px;background:#f0f8fc;"><span class="n">4.15</span></div>
<div class="c " style="left:825px;top:587px;width:67px;height:25px;line-height:29px;background:#f0f8fc;"><span class="n">3.39</span></div>
<div class="c " style="left:893px;top:587px;width:38px;height:25px;line-height:29px;background:#efefef;color:#0000ff;">负</div>
<div class="c " style="left:932px;top:587px;width:37px;height:25px;line-height:29px;background:#efefef;color:#0000ff;">输</div>
<div class="c " style="left:970px;top:587px;width:57px;height:25px;line-height:29px;background:#efefef;color:#0000ff;">小</div>
<div class="c tw" style="left:1px;top:613px;width:80px;height:25px;line-height:29px;background:#0066ff;">中超</div>
<div class="c " style="left:82px;top:613px;width:78px;height:25px;line-height:29px;background:#fff;"><span class="n">24-05-21</span></div>
<div class="c g" style="left:161px;top:613px;width:93px;height:25px;line-height:29px;background:#fff;">浙江队</div>
<div class="c " style="left:255px;top:613px;width:91px;height:25px;line-height:29px;background:#fff;"><span class="r"><span class="n">3-1</span></span><span class="n">(2-1)</span></div>
<div class="c " style="left:347px;top:613px;width:39px;height:25px;line-height:29px;background:#fff;"><span class="n">2-5</span></div>
<div class="c k" style="left:387px;top:613px;width:75px;height:25px;line-height:29px;background:#fff;">武汉三镇</div>
<div class="c " style="left:463px;top:613px;width:52px;height:25px;line-height:29px;background:#fdf9f6;"><span class="n">1.03</span></div>
<div class="c " style="left:516px;top:613px;width:100px;height:25px;line-height:29px;background:#fdf9f6;">一球</div>
<div class="c " style="left:617px;top:613px;width:52px;height:25px;line-height:29px;background:#fdf9f6;"><span class="n">0.79</span></div>
<div class="c " style="left:670px;top:613px;width:86px;height:25px;line-height:29px;background:#f0f8fc;"><span class="n">1.58</span></div>
<div class="c " style="left:757px;top:613px;width:67px;height:25px;line-height:29px;background:#f0f8fc;"><span class="n">4.21</span></div>
<div class="c " style="left:825px;top:613px;width:67px;height:25px;line-height:29px;background:#f0f8fc;"><span class="n">4.66</span></div>
<div class="c " style="left:893px;top:613px;width:38px;height:25px;line-height:29px;background:#fff;color:#ff0000;">胜</div>
<div class="c " style="left:932px;top:613px;width:37px;height:25px;line-height:29px;background:#fff;color:#ff0000;">赢</div>
<div class="c " style="left:970px;top:613px;width:57px;height:25px;line-height:29px;background:#fff;color:#ff0000;">大</div>
<div class="c tw" style="left:1px;top:639px;width:80px;height:25px;line-height:29px;background:#0066ff;">中超</div>
<div class="c " style="left:82px;top:639px;width:78px;height:25px;line-height:29px;background:#efefef;"><span class="n">24-05-17</span></div>
<div class="c g" style="left:161px;top:639px;width:93px;height:25px;line-height:29px;background:#efefef;">浙江队</div>
<div class="c " style="left:255px;top:639px;width:91px;height:25px;line-height:29px;background:#efefef;"><span class="r"><span class="n">5-2</span></span><span class="n">(3-1)</span></div>
<div class="c " style="left:347px;top:639px;width:39px;height:25px;line-height:29px;background:#efefef;"><span class="n">8-2</span></div>
<div class="c k" style="left:387px;top:639px;width:75px;height:25px;line-height:29px;background:#efefef;">南通支云</div>
<div class="c " style="left:463px;top:639px;width:52px;height:25px;line-height:29px;background:#fdf9f6;"><span class="n">0.86</span></div>
<div class="c " style="left:516px;top:639px;width:100px;height:25px;line-height:29px;background:#fdf9f6;">一<span class="n">/</span>球半</div>
<div class="c " style="left:617px;top:639px;width:52px;height:25px;line-height:29px;background:#fdf9f6;"><span class="n">1.00</span></div>
<div class="c " style="left:670px;top:639px;width:86px;height:25px;line-height:29px;background:#f0f8fc;"><span class="n">1.41</span></div>
<div class="c " style="left:757px;top:639px;width:67px;height:25px;line-height:29px;background:#f0f8fc;"><span class="n">4.65</span></div>
<div class="c " style="left:825px;top:639px;width:67px;height:25px;line-height:29px;background:#f0f8fc;"><span class="n">6.20</span></div>
<div class="c " style="left:893px;top:639px;width:38px;height:25px;line-height:29px;background:#efefef;color:#ff0000;">胜</div>
<div class="c " style="left:932px;top:639px;width:37px;height:25px;line-height:29px;background:#efefef;color:#ff0000;">赢</div>
<div class="c " style="left:970px;top:639px;width:57px;height:25px;line-height:29px;background:#efefef;color:#ff0000;">大</div>
<div class="c tw" style="left:1px;top:665px;width:80px;height:25px;line-height:29px;background:#0066ff;">中超</div>
<div class="c " style="left:82px;top:665px;width:78px;height:25px;line-height:29px;background:#fff;"><span class="n">24-05-12</span></div>
<div class="c k" style="left:161px;top:665px;width:93px;height:25px;line-height:29px;background:#fff;">沧州雄狮</div>
<div class="c " style="left:255px;top:665px;width:91px;height:25px;line-height:29px;background:#fff;"><span class="r"><span class="n">0-1</span></span><span class="n">(0-0)</span></div>
<div class="c " style="left:347px;top:665px;width:39px;height:25px;line-height:29px;background:#fff;"><span class="n">3-6</span></div>
<div class="c g" style="left:387px;top:665px;width:75px;height:25px;line-height:29px;background:#fff;">浙江队</div>
<div class="c " style="left:463px;top:665px;width:52px;height:25px;line-height:29px;background:#fdf9f6;"><span class="n">0.99</span></div>
<div class="c " style="left:516px;top:665px;width:100px;height:25px;line-height:29px;background:#fdf9f6;">受半<span class="n">/</span>一</div>
<div class="c " style="left:617px;top:665px;width:52px;height:25px;line-height:29px;background:#fdf9f6;"><span class="n">0.87</span></div>
<div class="c " style="left:670px;top:665px;width:86px;height:25px;line-height:29px;background:#f0f8fc;"><span class="n">3.92</span></div>
<div class="c " style="left:757px;top:665px;width:67px;height:25px;line-height:29px;background:#f0f8fc;"><span class="n">3.79</span></div>
<div class="c " style="left:825px;top:665px;width:67px;height:25px;line-height:29px;background:#f0f8fc;"><span class="n">1.78</span></div>
<div class="c " style="left:893px;top:665px;width:38px;height:25px;line-height:29px;background:#fff;color:#ff0000;">胜</div>
<div class="c " style="left:932px;top:665px;width:37px;height:25px;line-height:29px;background:#fff;color:#ff0000;">赢</div>
<div class="c " style="left:970px;top:665px;width:57px;height:25px;line-height:29px;background:#fff;color:#0000ff;">小</div>
<div class="c tw" style="left:1px;top:691px;width:80px;height:25px;line-height:29px;background:#0066ff;">中超</div>
<div class="c " style="left:82px;top:691px;width:78px;height:25px;line-height:29px;background:#efefef;"><span class="n">24-05-05</span></div>
<div class="c k" style="left:161px;top:691px;width:93px;height:25px;line-height:29px;background:#efefef;"><b class="rc"></b>上海申花</div>
<div class="c " style="left:255px;top:691px;width:91px;height:25px;line-height:29px;background:#efefef;"><span class="r"><span class="n">4-0</span></span><span class="n">(2-0)</span></div>
<div class="c " style="left:347px;top:691px;width:39px;height:25px;line-height:29px;background:#efefef;"><span class="n">7-2</span></div>
<div class="c g" style="left:387px;top:691px;width:75px;height:25px;line-height:29px;background:#efefef;">浙江队<b class="rc"></b></div>
<div class="c " style="left:463px;top:691px;width:52px;height:25px;line-height:29px;background:#fdf9f6;"><span class="n">1.00</span></div>
<div class="c " style="left:516px;top:691px;width:100px;height:25px;line-height:29px;background:#fdf9f6;">一球</div>
<div class="c " style="left:617px;top:691px;width:52px;height:25px;line-height:29px;background:#fdf9f6;"><span class="n">0.86</span></div>
<div class="c " style="left:670px;top:691px;width:86px;height:25px;line-height:29px;background:#f0f8fc;"><span class="n">1.56</span></div>
<div class="c " style="left:757px;top:691px;width:67px;height:25px;line-height:29px;background:#f0f8fc;"><span class="n">4.23</span></div>
<div class="c " style="left:825px;top:691px;width:67px;height:25px;line-height:29px;background:#f0f8fc;"><span class="n">4.78</span></div>
<div class="c " style="left:893px;top:691px;width:38px;height:25px;line-height:29px;background:#efefef;color:#0000ff;">负</div>
<div class="c " style="left:932px;top:691px;width:37px;height:25px;line-height:29px;background:#efefef;color:#0000ff;">输</div>
<div class="c " style="left:970px;top:691px;width:57px;height:25px;line-height:29px;background:#efefef;color:#ff0000;">大</div>
<div class="c sum" style="left:1px;top:717px;width:1026px;height:25px;line-height:29px;background:#fff;">近<span class="r"><span class="n">10</span></span>场<span class="n">,</span>胜<span class="n">6</span>平<span class="n">0</span>负<span class="n">4,</span> 胜率<span class="n">:</span><span class="r"><span class="n">60%</span></span> 让胜率<span class="n">:</span><span class="r"><span class="n">60%</span></span> 大率<span class="n">:</span><span class="r"><span class="n">50%</span></span> 单率<span class="n">:</span><span class="r"><span class="n">50%</span></span></div>
</body></html>
